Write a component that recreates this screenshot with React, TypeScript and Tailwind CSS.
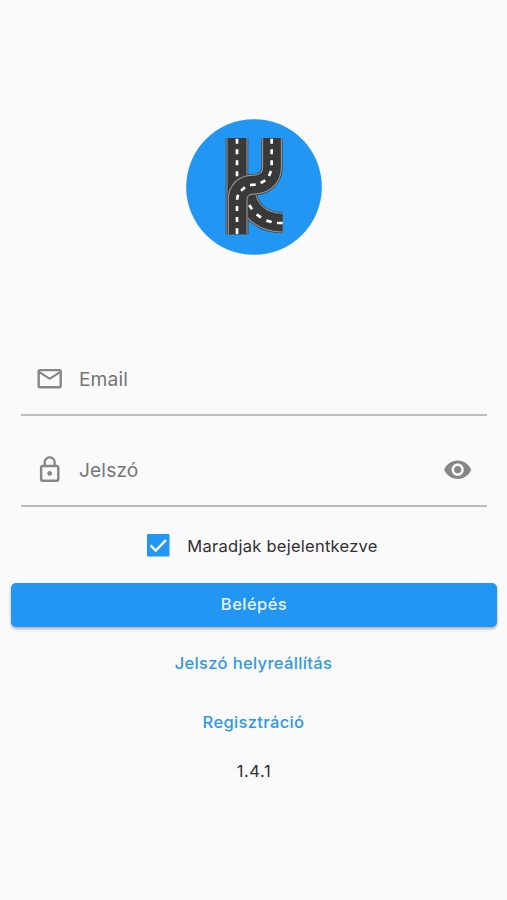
import type { ReactNode } from "react";

function Icon({ children }: { children: ReactNode }) {
  return (
    <svg viewBox="0 0 24 24" className="size-[29.4px] shrink-0 fill-[#878787]">
      {children}
    </svg>
  );
}

function Road({ d, width }: { d: string; width: number }) {
  return (
    <g fill="none">
      <path d={d} stroke="#454545" strokeWidth={width + 4} />
      <path d={d} stroke="#a09c99" strokeWidth={width - 1} />
      <path d={d} stroke="#393939" strokeWidth={width - 7} />
    </g>
  );
}

function Logo() {
  const main = "M276 78V165C276 202 250 218 219 218C190 219 173 235 173 264V367";
  const leg = "M198 235C200 292 245 332 308 332";
  return (
    <svg viewBox="0 0 408 408" className="size-[136px]">
      <circle cx="204" cy="204" r="203.5" fill="#2196f3" />
      <g transform="translate(-18 -21)">
        <Road d="M171 78V367" width={64} />
        <Road d={leg} width={60} />
        <Road d={main} width={60} />
        <g stroke="#fff" strokeWidth="8" fill="none">
          <path d="M171 80V95M171 112V127M171 145V160M171 178V193" />
          <path d="M275 80V95M275 112V127M275 145V160M273 177L267 192M256 205L242 213M227 218L210 219M195 226L183 236M174 248L171 263M171 282V297M171 315V330M171 349V366" />
          <path d="M208 279L216 292M230 307L243 317M259 326L275 330M291 333H308" />
        </g>
      </g>
    </svg>
  );
}

function Field({ label, icon, action }: { label: string; icon: ReactNode; action?: ReactNode }) {
  return (
    <div className="flex h-[73px] items-center border-b-2 border-[#bcbcbc] px-[14.5px]">
      {icon}
      <span className="ml-[14.5px] flex-1 text-[19.2px] leading-6 tracking-[0.15px] text-[#757575]">{label}</span>
      {action}
    </div>
  );
}

export default function App() {
  return (
    <main className="flex h-[900px] w-full flex-col items-center bg-[#fafafa] pt-[119px] font-['Inter','Liberation_Sans',sans-serif] text-[#303030]">
      <Logo />
      <div className="mt-[88px] flex w-full flex-col pr-5 pl-[20.5px]">
        <Field
          label="Email"
          icon={
            <Icon>
              <path d="M22 6c0-1.1-.9-2-2-2H4c-1.1 0-2 .9-2 2v12c0 1.1.9 2 2 2h16c1.1 0 2-.9 2-2V6zm-2 0l-8 5-8-5h16zm0 12H4V8l8 5 8-5v10z" />
            </Icon>
          }
        />
        <div className="pt-[18px]">
          <Field
            label="Jelszó"
            icon={
              <Icon>
                <path d="M12 17c1.1 0 2-.9 2-2s-.9-2-2-2-2 .9-2 2 .9 2 2 2zm6-9h-1V6c0-2.76-2.24-5-5-5S7 3.24 7 6v2H6c-1.1 0-2 .9-2 2v10c0 1.1.9 2 2 2h12c1.1 0 2-.9 2-2V10c0-1.1-.9-2-2-2zM8.9 6c0-1.71 1.39-3.1 3.1-3.1s3.1 1.39 3.1 3.1v2H8.9V6zM18 20H6V10h12v10z" />
              </Icon>
            }
            action={
              <Icon>
                <path d="M12 4.5C7 4.5 2.73 7.61 1 12c1.73 4.39 6 7.5 11 7.5s9.27-3.11 11-7.5c-1.73-4.39-6-7.5-11-7.5zM12 17c-2.76 0-5-2.24-5-5s2.24-5 5-5 5 2.24 5 5-2.24 5-5 5zm0-8c-1.66 0-3 1.34-3 3s1.34 3 3 3 3-1.34 3-3-1.34-3-3-3z" />
              </Icon>
            }
          />
        </div>
      </div>
      <label className="mt-[26.5px] ml-[18px] flex h-6 items-center">
        <svg viewBox="0 0 22 22" className="size-[22.5px]">
          <rect width="22" height="22" rx="1" fill="#2196f3" />
          <path d="M3.5 11.2L8.5 16.2L18.5 6" fill="none" stroke="#fff" strokeWidth="2.3" />
        </svg>
        <span className="ml-[17.5px] text-[16.5px] leading-6 tracking-[0.26px]">Maradjak bejelentkezve</span>
      </label>
      <button className="mt-[25px] ml-[1px] h-11 w-[486px] rounded-[5px] bg-[#2196f3] text-[16.5px] font-medium tracking-[0.45px] text-[#e8f4fe] shadow-[0_2px_3px_rgba(0,0,0,0.3)]">
        Belépés
      </button>
      <a className="mt-[24.5px] text-[16.5px] leading-6 font-medium tracking-[0.35px] text-[#3198e8]">Jelszó helyreállítás</a>
      <a className="mt-[34.5px] text-[16.5px] leading-6 font-medium tracking-[0.35px] text-[#3198e8]">Regisztráció</a>
      <p className="mt-[25px] ml-[1px] text-[16.5px] leading-6 tracking-[0.6px]">1.4.1</p>
    </main>
  );
}
